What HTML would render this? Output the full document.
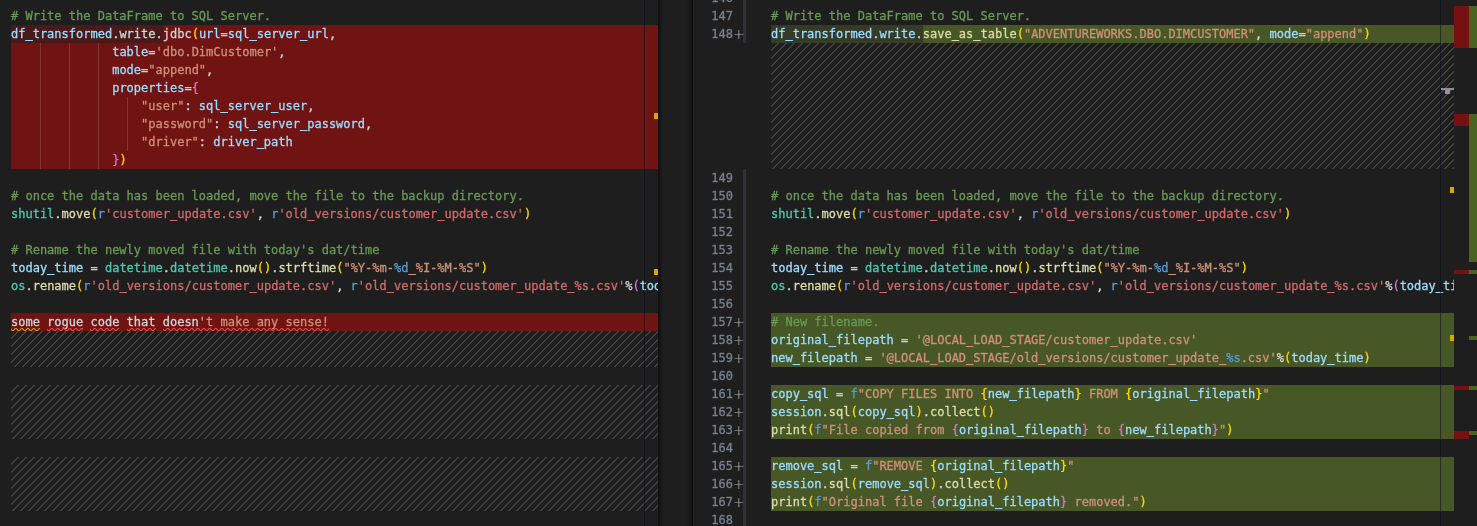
<!DOCTYPE html>
<html lang="en">
<head>
<meta charset="utf-8">
<title>Diff: customer_update.py</title>
<style>
html,body{margin:0;padding:0;}
body{width:1477px;height:526px;overflow:hidden;background:#1e1e1e;position:relative;
 font-family:"DejaVu Sans Mono","Liberation Mono",monospace;font-size:12px;line-height:18px;color:#d4d4d4;
 letter-spacing:0;font-variant-ligatures:none;-webkit-font-smoothing:antialiased;}
.pane{position:absolute;top:0;height:526px;overflow:hidden;}
#left{left:0;width:658px;}
#right{left:692px;width:785px;}
.ln{position:absolute;left:0;right:0;height:18px;white-space:pre;will-change:transform;-webkit-text-stroke:0.3px;}
.bg{position:absolute;height:18px;}
.code{position:absolute;top:0;height:18px;white-space:pre;}
#left .code{left:11px;}
#right .code{left:79px;}
.num{position:absolute;left:0;width:41px;text-align:right;color:#76808e;top:0;height:18px;}
.plus{position:absolute;left:41px;top:0;font-family:"DejaVu Sans Light","DejaVu Sans",sans-serif;font-weight:200;font-size:14px;line-height:18px;color:#b8b8b8;-webkit-text-stroke:0;}
.c{color:#6a9955}.v{color:#9cdcfe}.p{color:#d4d4d4}.f{color:#dcdcaa}.s{color:#ce9178}
.r{color:#d16969}.k{color:#569cd6}.t{color:#4ec9b0}.b1{color:#ffd700}.b2{color:#da70d6}
.red{background:#701313}.dred{background:#4a1a1a}
.grn{background:#475726}.dgrn{background:#353b26}
.hatch{position:absolute;
 background-image:linear-gradient(-45deg,rgba(204,204,204,.2) 12.5%,transparent 12.5%,transparent 50%,rgba(204,204,204,.2) 50%,rgba(204,204,204,.2) 62.5%,transparent 62.5%,transparent 100%);
 background-size:8px 8px;}
.guide{position:absolute;width:1px;background:rgba(255,255,255,.14);}
.sq{position:absolute;top:328px;height:3px;}
.abs{position:absolute;}
</style>
</head>
<body>

<!-- ORIGINAL (left) -->
<div class="pane" id="left">
 <div class="bg dred" style="left:11px;top:25px;width:152px"></div>
 <div class="bg red" style="left:163px;top:25px;width:495px"></div>
 <div class="bg red" style="left:11px;top:43px;width:647px;height:126px"></div>
 <div class="bg red" style="left:11px;top:313px;width:647px"></div>
 <div class="hatch" style="left:11px;top:331px;width:647px;height:36px"></div>
 <div class="hatch" style="left:11px;top:385px;width:647px;height:54px"></div>
 <div class="hatch" style="left:11px;top:457px;width:647px;height:54px"></div>

 <div class="guide" style="left:40px;top:43px;height:126px"></div>
 <div class="guide" style="left:69px;top:43px;height:126px"></div>
 <div class="guide" style="left:98px;top:43px;height:126px"></div>
 <div class="guide" style="left:127px;top:97px;height:54px"></div>

 <div class="ln" style="top:7px"><span class="code"><span class="c"># Write the DataFrame to SQL Server.</span></span></div>
 <div class="ln" style="top:25px"><span class="code"><span class="v">df_transformed</span>.write.jdbc<span class="b1">(</span><span class="v">url</span>=<span class="v">sql_server_url</span>,</span></div>
 <div class="ln" style="top:43px"><span class="code">              <span class="v">table</span>=<span class="s">'dbo.DimCustomer'</span>,</span></div>
 <div class="ln" style="top:61px"><span class="code">              <span class="v">mode</span>=<span class="s">"append"</span>,</span></div>
 <div class="ln" style="top:79px"><span class="code">              <span class="v">properties</span>=<span class="b2">{</span></span></div>
 <div class="ln" style="top:97px"><span class="code">                  <span class="s">"user"</span>: <span class="v">sql_server_user</span>,</span></div>
 <div class="ln" style="top:115px"><span class="code">                  <span class="s">"password"</span>: <span class="v">sql_server_password</span>,</span></div>
 <div class="ln" style="top:133px"><span class="code">                  <span class="s">"driver"</span>: <span class="v">driver_path</span></span></div>
 <div class="ln" style="top:151px"><span class="code">              <span class="b2">}</span><span class="b1">)</span></span></div>
 <div class="ln" style="top:187px"><span class="code"><span class="c"># once the data has been loaded, move the file to the backup directory.</span></span></div>
 <div class="ln" style="top:205px"><span class="code"><span class="t">shutil</span>.<span class="f">move</span><span class="b1">(</span><span class="k">r</span><span class="r">'customer_update.csv'</span>, <span class="k">r</span><span class="r">'old_versions/customer_update.csv'</span><span class="b1">)</span></span></div>
 <div class="ln" style="top:241px"><span class="code"><span class="c"># Rename the newly moved file with today's dat/time</span></span></div>
 <div class="ln" style="top:259px"><span class="code"><span class="v">today_time</span> = <span class="t">datetime</span>.<span class="t">datetime</span>.<span class="f">now</span><span class="b1">()</span>.<span class="f">strftime</span><span class="b1">(</span><span class="s">"%Y-%m-</span><span class="k">%d</span><span class="s">_%I-%M-%S"</span><span class="b1">)</span></span></div>
 <div class="ln" style="top:277px"><span class="code"><span class="t">os</span>.<span class="f">rename</span><span class="b1">(</span><span class="k">r</span><span class="r">'old_versions/customer_update.csv'</span>, <span class="k">r</span><span class="r">'old_versions/customer_update_%s.csv'</span>%<span class="b2">(</span><span class="v">today_time</span><span class="b2">)</span><span class="b1">)</span></span></div>
 <div class="ln" style="top:313px"><span class="code">some rogue code that doesn<span class="s">'t make any sense!</span></span></div>
 <svg width="0" height="0" style="position:absolute">
  <defs>
   <pattern id="sqr" width="6" height="3" patternUnits="userSpaceOnUse"><g fill="#f14c4c"><polygon points="5.5,0 2.5,3 1.1,3 4.1,0"/><polygon points="4,0 6,2 6,0.6 5.4,0"/><polygon points="0,2 1,3 2.4,3 0,0.6"/></g></pattern>
   <pattern id="sqy" width="6" height="3" patternUnits="userSpaceOnUse"><g fill="#cca700"><polygon points="5.5,0 2.5,3 1.1,3 4.1,0"/><polygon points="4,0 6,2 6,0.6 5.4,0"/><polygon points="0,2 1,3 2.4,3 0,0.6"/></g></pattern>
  </defs>
 </svg>
 <svg class="sq" style="left:11px" width="29" height="3"><rect width="29" height="3" fill="url(#sqy)"/></svg>
 <svg class="sq" style="left:47px" width="36" height="3"><rect width="36" height="3" fill="url(#sqr)"/></svg>
 <svg class="sq" style="left:90px" width="29" height="3"><rect width="29" height="3" fill="url(#sqr)"/></svg>
 <svg class="sq" style="left:127px" width="29" height="3"><rect width="29" height="3" fill="url(#sqr)"/></svg>
 <svg class="sq" style="left:163px" width="166" height="3"><rect width="166" height="3" fill="url(#sqr)"/></svg>

 <!-- overview ruler of original editor -->
 <div class="abs" style="left:644px;top:0;width:1px;height:526px;background:rgba(6,10,24,.5)"></div>
 <div class="abs" style="left:654px;top:113px;width:4px;height:6px;background:#d7a800"></div>
 <div class="abs" style="left:654px;top:269px;width:4px;height:6px;background:#d7a800"></div>
</div>

<!-- centre gutter -->
<div class="abs" style="left:658px;top:0;width:34px;height:526px;background:#1e1e1e"></div>
<div class="abs" style="left:658px;top:0;width:5px;height:526px;background:linear-gradient(90deg,rgba(0,0,0,.55),rgba(0,0,0,.28) 40%,rgba(0,0,0,0))"></div>
<div class="abs" style="left:686px;top:0;width:7px;height:526px;background:linear-gradient(90deg,rgba(0,0,0,0),rgba(0,0,0,.18) 60%,rgba(0,0,0,.6))"></div>

<!-- MODIFIED (right) -->
<div class="pane" id="right">
 <!-- backgrounds : pane-local x = page x - 692 -->
 <div class="bg dgrn" style="left:79px;top:25px;width:152px"></div>
 <div class="bg grn" style="left:231px;top:25px;width:531px"></div>
 <div class="hatch" style="left:79px;top:43px;width:683px;height:126px"></div>
 <div class="bg grn" style="left:79px;top:313px;width:683px;height:54px"></div>
 <div class="bg grn" style="left:79px;top:385px;width:683px;height:54px"></div>
 <div class="bg grn" style="left:79px;top:457px;width:683px;height:54px"></div>

 <!-- dirty-diff gutter bar -->
 <div class="abs" style="left:51px;top:0;width:3px;height:43px;background:#303038"></div>
 <div class="abs" style="left:51px;top:169px;width:3px;height:357px;background:#303038"></div>

 <div class="ln" style="top:-11px"><span class="num">146</span></div>
 <div class="ln" style="top:7px"><span class="num">147</span><span class="code"><span class="c"># Write the DataFrame to SQL Server.</span></span></div>
 <div class="ln" style="top:25px"><span class="num">148</span><span class="plus">+</span><span class="code"><span class="v">df_transformed</span>.<span class="v">write</span>.<span class="f">save_as_table</span><span class="b1">(</span><span class="s">"ADVENTUREWORKS.DBO.DIMCUSTOMER"</span>, <span class="v">mode</span>=<span class="s">"append"</span><span class="b1">)</span></span></div>
 <div class="ln" style="top:169px"><span class="num">149</span></div>
 <div class="ln" style="top:187px"><span class="num">150</span><span class="code"><span class="c"># once the data has been loaded, move the file to the backup directory.</span></span></div>
 <div class="ln" style="top:205px"><span class="num">151</span><span class="code"><span class="t">shutil</span>.<span class="f">move</span><span class="b1">(</span><span class="k">r</span><span class="r">'customer_update.csv'</span>, <span class="k">r</span><span class="r">'old_versions/customer_update.csv'</span><span class="b1">)</span></span></div>
 <div class="ln" style="top:223px"><span class="num">152</span></div>
 <div class="ln" style="top:241px"><span class="num">153</span><span class="code"><span class="c"># Rename the newly moved file with today's dat/time</span></span></div>
 <div class="ln" style="top:259px"><span class="num">154</span><span class="code"><span class="v">today_time</span> = <span class="t">datetime</span>.<span class="t">datetime</span>.<span class="f">now</span><span class="b1">()</span>.<span class="f">strftime</span><span class="b1">(</span><span class="s">"%Y-%m-</span><span class="k">%d</span><span class="s">_%I-%M-%S"</span><span class="b1">)</span></span></div>
 <div class="ln" style="top:277px"><span class="num">155</span><span class="code"><span class="t">os</span>.<span class="f">rename</span><span class="b1">(</span><span class="k">r</span><span class="r">'old_versions/customer_update.csv'</span>, <span class="k">r</span><span class="r">'old_versions/customer_update_%s.csv'</span>%<span class="b2">(</span><span class="v">today_time</span><span class="b2">)</span><span class="b1">)</span></span></div>
 <div class="ln" style="top:295px"><span class="num">156</span></div>
 <div class="ln" style="top:313px"><span class="num">157</span><span class="plus">+</span><span class="code"><span class="c"># New filename.</span></span></div>
 <div class="ln" style="top:331px"><span class="num">158</span><span class="plus">+</span><span class="code"><span class="v">original_filepath</span> = <span class="s">'@LOCAL_LOAD_STAGE/customer_update.csv'</span></span></div>
 <div class="ln" style="top:349px"><span class="num">159</span><span class="plus">+</span><span class="code"><span class="v">new_filepath</span> = <span class="s">'@LOCAL_LOAD_STAGE/old_versions/customer_update_</span><span class="k">%s</span><span class="s">.csv'</span>%<span class="b1">(</span><span class="v">today_time</span><span class="b1">)</span></span></div>
 <div class="ln" style="top:367px"><span class="num">160</span></div>
 <div class="ln" style="top:385px"><span class="num">161</span><span class="plus">+</span><span class="code"><span class="v">copy_sql</span> = <span class="k">f</span><span class="s">"COPY FILES INTO </span><span class="b1">{</span><span class="v">new_filepath</span><span class="b1">}</span><span class="s"> FROM </span><span class="b1">{</span><span class="v">original_filepath</span><span class="b1">}</span><span class="s">"</span></span></div>
 <div class="ln" style="top:403px"><span class="num">162</span><span class="plus">+</span><span class="code"><span class="v">session</span>.<span class="f">sql</span><span class="b1">(</span><span class="v">copy_sql</span><span class="b1">)</span>.<span class="f">collect</span><span class="b1">()</span></span></div>
 <div class="ln" style="top:421px"><span class="num">163</span><span class="plus">+</span><span class="code"><span class="f">print</span><span class="b1">(</span><span class="k">f</span><span class="s">"File copied from </span><span class="b2">{</span><span class="v">original_filepath</span><span class="b2">}</span><span class="s"> to </span><span class="b2">{</span><span class="v">new_filepath</span><span class="b2">}</span><span class="s">"</span><span class="b1">)</span></span></div>
 <div class="ln" style="top:439px"><span class="num">164</span></div>
 <div class="ln" style="top:457px"><span class="num">165</span><span class="plus">+</span><span class="code"><span class="v">remove_sql</span> = <span class="k">f</span><span class="s">"REMOVE </span><span class="b1">{</span><span class="v">original_filepath</span><span class="b1">}</span><span class="s">"</span></span></div>
 <div class="ln" style="top:475px"><span class="num">166</span><span class="plus">+</span><span class="code"><span class="v">session</span>.<span class="f">sql</span><span class="b1">(</span><span class="v">remove_sql</span><span class="b1">)</span>.<span class="f">collect</span><span class="b1">()</span></span></div>
 <div class="ln" style="top:493px"><span class="num">167</span><span class="plus">+</span><span class="code"><span class="f">print</span><span class="b1">(</span><span class="k">f</span><span class="s">"Original file </span><span class="b2">{</span><span class="v">original_filepath</span><span class="b2">}</span><span class="s"> removed."</span><span class="b1">)</span></span></div>
 <div class="ln" style="top:511px"><span class="num">168</span></div>

 <!-- everything right of x=1454 (local 762) : diff overview -->
 <div class="abs" style="left:762px;top:0;width:23px;height:526px;background:#1e1e1e"></div>
 <!-- overview ruler of modified editor -->
 <div class="abs" style="left:748px;top:0;width:1px;height:526px;background:rgba(6,10,24,.5)"></div>
 <div class="abs" style="left:749px;top:88px;width:13px;height:2px;background:#8f8f8f"></div>
 <div class="abs" style="left:753px;top:90px;width:5px;height:4px;background:#a985a9"></div>
 <div class="abs" style="left:758px;top:187px;width:4px;height:6px;background:#d7a800"></div>
 <div class="abs" style="left:758px;top:335px;width:4px;height:6px;background:#d7a800"></div>

 <!-- diff overview: red = original (15px), green = modified (8px) -->
 <div class="abs" style="left:762px;top:6px;width:15px;height:42px;background:#771111"></div>
 <div class="abs" style="left:777px;top:6px;width:8px;height:42px;background:#4a6321"></div>
 <div class="abs" style="left:762px;top:114px;width:15px;height:12px;background:#771111"></div>
 <div class="abs" style="left:777px;top:114px;width:8px;height:148px;background:#4a6321"></div>
 <div class="abs" style="left:762px;top:270px;width:15px;height:4px;background:#771111"></div>
 <div class="abs" style="left:777px;top:270px;width:8px;height:4px;background:#4a6321"></div>
 <div class="abs" style="left:777px;top:336px;width:8px;height:4px;background:#4a6321"></div>
 <div class="abs" style="left:762px;top:386px;width:15px;height:4px;background:#771111"></div>
 <div class="abs" style="left:777px;top:386px;width:8px;height:4px;background:#4a6321"></div>
 <div class="abs" style="left:762px;top:431px;width:15px;height:8px;background:#771111"></div>
 <div class="abs" style="left:777px;top:431px;width:8px;height:4px;background:#4a6321"></div>
</div>

</body>
</html>
